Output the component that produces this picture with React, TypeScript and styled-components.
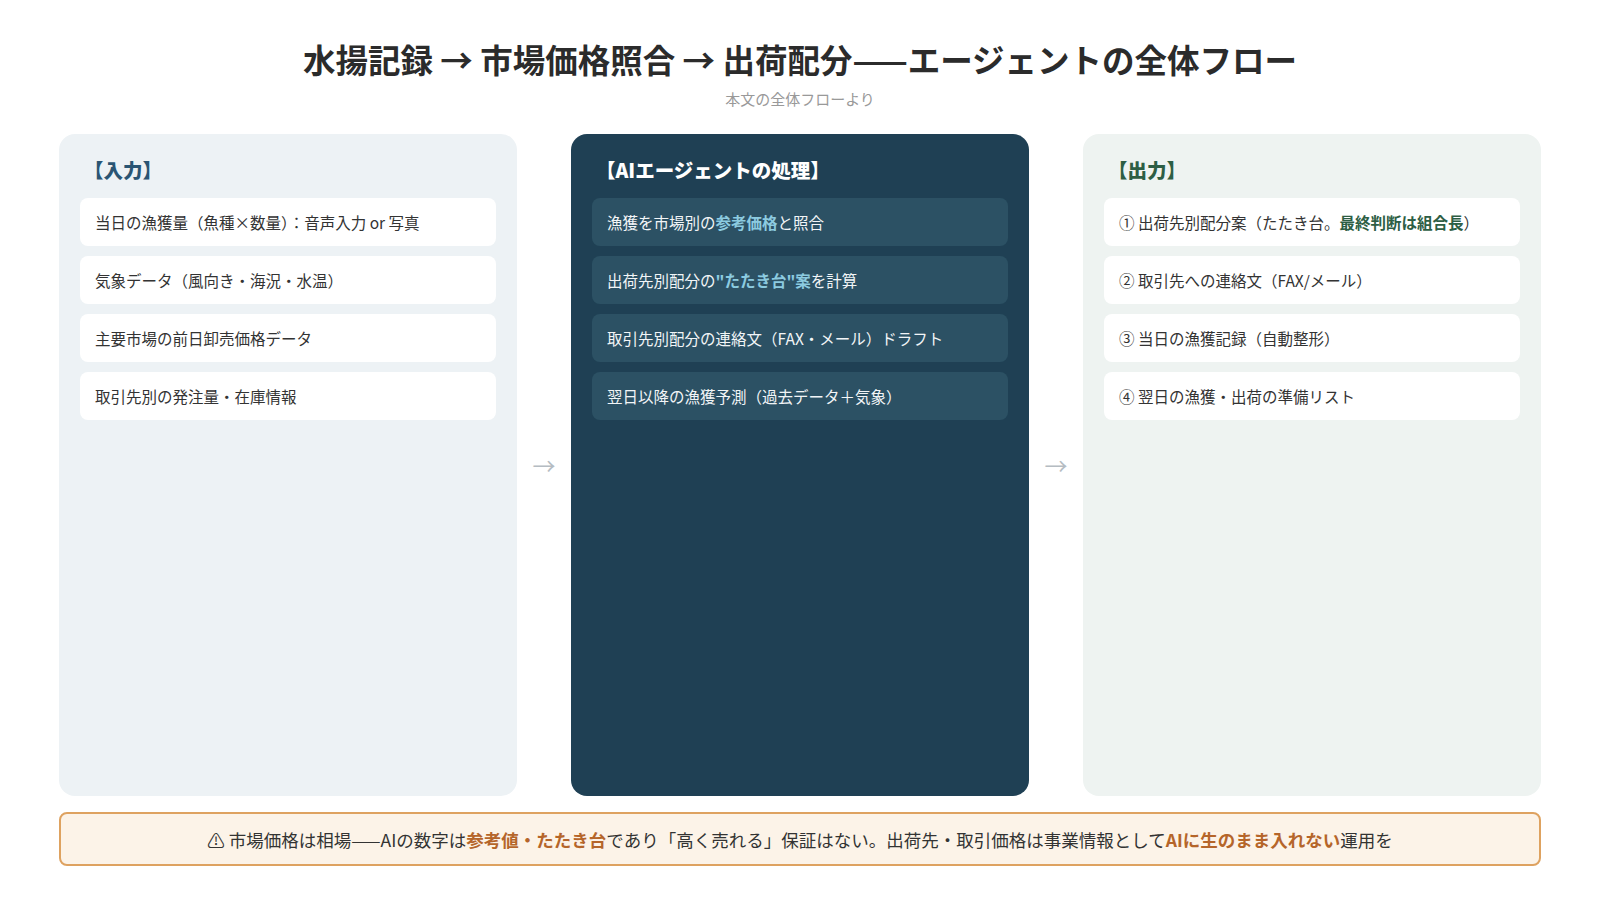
import React from "react";
import styled, { createGlobalStyle } from "styled-components";

const Global = createGlobalStyle`
  html, body { margin: 0; background: #fff; }
  body { font-family: "Noto Sans CJK JP", "Noto Sans", sans-serif; color: #333; }
`;

const Page = styled.div`
  width: 1600px; height: 900px; box-sizing: border-box;
  padding: 35px 59px 0 59px;
  display: flex; flex-direction: column; align-items: stretch;
`;
const Title = styled.h1`
  margin: 0; text-align: center; font-size: 32.5px; font-weight: 700; color: #2b2b2b; line-height: 48px;
`;
const Sub = styled.div`
  text-align: center; font-size: 15px; color: #999; margin-top: 6px; line-height: 20px;
`;
const Row = styled.div`
  display: flex; margin-top: 25px; height: 662px; align-items: stretch;
`;
const Arrow = styled.div`
  width: 54px; display: flex; align-items: center; justify-content: center;
  color: #b5bcc2; font-size: 23px;
`;
const Col = styled.div<{ $bg: string }>`
  flex: 1; background: ${p => p.$bg}; border-radius: 16px;
  padding: 21px 21px; display: flex; flex-direction: column; gap: 10px;
`;
const Head = styled.div<{ $c: string }>`
  font-size: 19.5px; font-weight: 900; color: ${p => p.$c}; line-height: 30px; margin-bottom: 3px; padding-left: 4px;
`;
const Card = styled.div<{ $bg: string; $c: string }>`
  background: ${p => p.$bg}; color: ${p => p.$c}; border-radius: 8px;
  height: 48px; display: flex; align-items: center; padding: 0 15px; font-size: 15.5px;
`;
const Em = styled.b<{ $c: string }>` color: ${p => p.$c}; font-weight: 700; `;
const Note = styled.div`
  margin-top: 16px; height: 50px; border: 2px solid #dea260; border-radius: 8px; background: #fcf3e8;
  display: flex; align-items: center; justify-content: center; font-size: 17.5px; color: #333;
`;

export default function App() {
  const L = { bg: "#fff", c: "#333" };
  const M = { bg: "#2c5164", c: "#f2f5f7" };
  return (
    <Page>
      <Global />
      <Title>水揚記録 → 市場価格照合 → 出荷配分——エージェントの全体フロー</Title>
      <Sub>本文の全体フローより</Sub>
      <Row>
        <Col $bg="#edf2f5">
          <Head $c="#2a5573">【入力】</Head>
          <Card $bg={L.bg} $c={L.c}>当日の漁獲量（魚種×数量）：音声入力 or 写真</Card>
          <Card $bg={L.bg} $c={L.c}>気象データ（風向き・海況・水温）</Card>
          <Card $bg={L.bg} $c={L.c}>主要市場の前日卸売価格データ</Card>
          <Card $bg={L.bg} $c={L.c}>取引先別の発注量・在庫情報</Card>
        </Col>
        <Arrow>→</Arrow>
        <Col $bg="#1f4054">
          <Head $c="#fff">【AIエージェントの処理】</Head>
          <Card $bg={M.bg} $c={M.c}>漁獲を市場別の<Em $c="#8ccbe0">参考価格</Em>と照合</Card>
          <Card $bg={M.bg} $c={M.c}>出荷先別配分の<Em $c="#8ccbe0">"たたき台"案</Em>を計算</Card>
          <Card $bg={M.bg} $c={M.c}>取引先別配分の連絡文（FAX・メール）ドラフト</Card>
          <Card $bg={M.bg} $c={M.c}>翌日以降の漁獲予測（過去データ＋気象）</Card>
        </Col>
        <Arrow>→</Arrow>
        <Col $bg="#eef3f1">
          <Head $c="#2d5e44">【出力】</Head>
          <Card $bg={L.bg} $c={L.c}>① 出荷先別配分案（たたき台。<Em $c="#2d5e44">最終判断は組合長</Em>）</Card>
          <Card $bg={L.bg} $c={L.c}>② 取引先への連絡文（FAX/メール）</Card>
          <Card $bg={L.bg} $c={L.c}>③ 当日の漁獲記録（自動整形）</Card>
          <Card $bg={L.bg} $c={L.c}>④ 翌日の漁獲・出荷の準備リスト</Card>
        </Col>
      </Row>
      <Note>
        ⚠ 市場価格は相場——AIの数字は<Em $c="#b5652a">参考値・たたき台</Em>であり「高く売れる」保証はない。出荷先・取引価格は事業情報として<Em $c="#b5652a">AIに生のまま入れない</Em>運用を
      </Note>
    </Page>
  );
}
